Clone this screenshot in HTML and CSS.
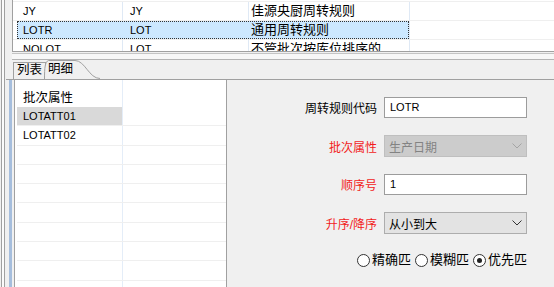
FILE: index.html
```html
<!DOCTYPE html>
<html lang="zh">
<head>
<meta charset="utf-8">
<title>周转规则</title>
<link rel="stylesheet" href="styles.css">
</head>
<body>
<div class="app">
  <div class="rail"></div>
  <div class="main">
    <div class="topgrid">
      <div class="trow">
        <div class="c0"></div>
        <div class="cells">
          <div class="c1">JY</div><div class="c2">JY</div><div class="c3">佳源央厨周转规则</div>
        </div>
        <div class="c4"></div>
      </div>
      <div class="trow">
        <div class="c0"></div>
        <div class="cells sel">
          <div class="c1">LOTR</div><div class="c2">LOT</div><div class="c3">通用周转规则</div>
        </div>
        <div class="c4"></div>
      </div>
      <div class="trow">
        <div class="c0"></div>
        <div class="cells">
          <div class="c1">NOLOT</div><div class="c2">LOT</div><div class="c3">不管批次按库位排序的</div>
        </div>
        <div class="c4"></div>
      </div>
    </div>
    <div class="splitter"></div>
    <div class="tabstrip">
      <div class="tab">列表</div>
      <div class="tab active">
        <svg class="tabshape" width="56" height="19" viewBox="0 0 56 19"><path d="M0.5 19 C0.5 8 1 1.5 4.5 0.5 L31 0.5 C41 0.5 45 18.5 56 18.5" fill="#f0f0f0" stroke="#a0a0a0" stroke-width="1"/></svg>
        <span class="tabtext">明细</span>
      </div>
    </div>
    <div class="tabpage">
      <div class="gutter"></div>
      <div class="lgrid">
        <div class="lhead"><div class="l1">批次属性</div><div class="l2"></div></div>
        <div class="lrow sel"><div class="l1">LOTATT01</div><div class="l2"></div></div>
        <div class="lrow"><div class="l1">LOTATT02</div><div class="l2"></div></div>
        <div class="lrow"><div class="l1"></div><div class="l2"></div></div>
        <div class="lrow"><div class="l1"></div><div class="l2"></div></div>
        <div class="lrow"><div class="l1"></div><div class="l2"></div></div>
        <div class="lrow"><div class="l1"></div><div class="l2"></div></div>
        <div class="lrow"><div class="l1"></div><div class="l2"></div></div>
        <div class="lrow"><div class="l1"></div><div class="l2"></div></div>
        <div class="lrow"><div class="l1"></div><div class="l2"></div></div>
        <div class="lrow"><div class="l1"></div><div class="l2"></div></div>
      </div>
      <div class="form">
        <div class="lbl">周转规则代码</div>
        <div class="input">LOTR</div>
        <div class="lbl req">批次属性</div>
        <div class="combo disabled"><span>生产日期</span><svg class="chev" width="10" height="6" viewBox="0 0 10 6"><path d="M0.5 0.5 L5 5 L9.5 0.5" fill="none" stroke="currentColor" stroke-width="1"/></svg></div>
        <div class="lbl req">顺序号</div>
        <div class="input">1</div>
        <div class="lbl req">升序/降序</div>
        <div class="combo"><span>从小到大</span><svg class="chev" width="10" height="6" viewBox="0 0 10 6"><path d="M0.5 0.5 L5 5 L9.5 0.5" fill="none" stroke="currentColor" stroke-width="1"/></svg></div>
        <div class="radios">
          <div class="radio"><span class="dot"></span><span>精确匹</span></div>
          <div class="radio"><span class="dot"></span><span>模糊匹</span></div>
          <div class="radio"><span class="dot checked"></span><span>优先匹</span></div>
        </div>
      </div>
    </div>
  </div>
</div>
</body>
</html>
```
FILE: styles.css
```css
html, body {
  margin: 0;
  padding: 0;
  background: #f0f0f0;
}
.app {
  width: 554px;
  height: 287px;
  display: flex;
  overflow: hidden;
  background: #f0f0f0;
  font-family: "Liberation Sans", "Noto Sans CJK SC", sans-serif;
  font-size: 11px;
  color: #000;
}
.rail {
  width: 6px;
  flex: none;
  background: linear-gradient(90deg, #f0f0f0 0 1px, #a0a0a0 1px 2px, #fbfbfb 2px 4px, #a0a0a0 4px 5px, #f0f0f0 5px 6px);
}
.main {
  flex: 1;
  min-width: 0;
  display: flex;
  flex-direction: column;
}
/* top grid */
.topgrid {
  flex: none;
  box-sizing: border-box;
  height: 52px;
  padding-top: 1px;
  margin-left: 6px;
  border-left: 1px solid #a0a0a0;
  border-bottom: 1px solid #a0a0a0;
  background: #fff;
  overflow: hidden;
}
.trow {
  display: flex;
  box-sizing: border-box;
  height: 19px;
  border-top: 1px solid #efefef;
}
.c0 { width: 4px; flex: none; }
.cells { display: flex; width: 392px; flex: none; }
.c1, .c2, .c3 {
  box-sizing: border-box;
  line-height: 18px;
  white-space: nowrap;
  overflow: hidden;
}
.c1 { width: 105px; padding-left: 6px; }
.c2 { width: 126px; padding-left: 7px; border-left: 1px solid #dfe9f5; }
.c3 { width: 161px; padding-left: 2px; border-left: 1px solid #dfe9f5; font-size: 13px; }
.c4 { flex: 1; border-left: 1px solid #dfe9f5; }
.cells.sel {
  background: #cce8ff;
  outline: 1px dotted #333;
  outline-offset: -1px;
}
.cells.sel .c2, .cells.sel .c3 { border-left-color: transparent; }
/* splitter */
.splitter {
  flex: none;
  height: 8px;
  margin-left: 6px;
  background: linear-gradient(#f0f0f0 0 1px, #c4c4c4 1px 2px, #f7f7f7 2px 7px, #b4b4b4 7px 8px);
}
/* tabs */
.tabstrip {
  flex: none;
  height: 19px;
  display: flex;
  align-items: flex-end;
  padding-left: 7px;
}
.tab {
  box-sizing: border-box;
  height: 17px;
  width: 33px;
  border: 1px solid #a0a0a0;
  border-bottom: none;
  padding-left: 3px;
  font-size: 12.5px;
  line-height: 15px;
  white-space: nowrap;
}
.tab.active {
  position: relative;
  height: 19px;
  width: 56px;
  margin-left: -2px;
  border: none;
  padding-left: 4px;
  line-height: 19px;
}
.tabshape {
  position: absolute;
  left: 0;
  top: 0;
}
.tabtext { position: relative; }
/* tab page */
.tabpage {
  flex: 1;
  min-height: 0;
  display: flex;
  border-top: 1px solid #a0a0a0;
}
.gutter {
  width: 8px;
  flex: none;
  background: linear-gradient(90deg, #f0f0f0 0 3px, #a6bedd 3px 6px, #f0f0f0 6px 8px);
  border-right: 1px solid #a0a0a0;
}
.lgrid {
  flex: none;
  box-sizing: border-box;
  width: 212px;
  padding-left: 2px;
  background: #fff;
  border-right: 1px solid #a0a0a0;
  overflow: hidden;
}
.lhead {
  display: flex;
  height: 27px;
}
.lhead .l1 {
  display: flex;
  align-items: center;
  padding-top: 6px;
  font-size: 12.5px;
}
.lrow {
  display: flex;
  box-sizing: border-box;
  height: 19.3px;
  border-bottom: 1px solid #efefef;
}
.l1 {
  box-sizing: border-box;
  width: 105px;
  flex: none;
  padding-left: 6px;
  display: flex;
  align-items: center;
}
.l2 {
  flex: 1;
  border-left: 1px solid #e4edf8;
}
.lrow.sel .l1 { background: #d9d9d9; }
/* form */
.form {
  flex: 1;
  display: grid;
  grid-template-columns: auto 143px;
  justify-content: end;
  align-content: start;
  column-gap: 7px;
  row-gap: 17px;
  padding: 17px 27px 0 0;
}
.lbl {
  align-self: center;
  text-align: right;
  font-size: 12px;
  white-space: nowrap;
}
.lbl.req { color: #f21c1c; }
.input {
  box-sizing: border-box;
  height: 21px;
  border: 1px solid #9c9c9c;
  background: #fff;
  padding-left: 5px;
  line-height: 19px;
  font-size: 11px;
}
.combo {
  box-sizing: border-box;
  height: 22px;
  display: flex;
  align-items: center;
  justify-content: space-between;
  padding: 0 4px 0 4px;
  border: 1px solid #adadad;
  background: #e3e3e3;
  font-size: 12px;
  color: #000;
}
.combo .chev { color: #333; }
.combo.disabled {
  background: #cccccc;
  border-color: #bfbfbf;
  color: #838383;
}
.combo.disabled .chev { color: #a4a4a4; }
.radios {
  grid-column: 1 / -1;
  justify-self: end;
  display: flex;
  gap: 4px;
  margin-top: 1px;
}
.radio {
  display: flex;
  align-items: center;
  gap: 2px;
  font-size: 13px;
  line-height: 16px;
}
.dot {
  box-sizing: border-box;
  width: 13px;
  height: 13px;
  border: 1px solid #333;
  border-radius: 50%;
  background: #fff;
  display: grid;
  place-items: center;
}
.dot.checked::after {
  content: "";
  width: 5px;
  height: 5px;
  border-radius: 50%;
  background: #222;
}
```
